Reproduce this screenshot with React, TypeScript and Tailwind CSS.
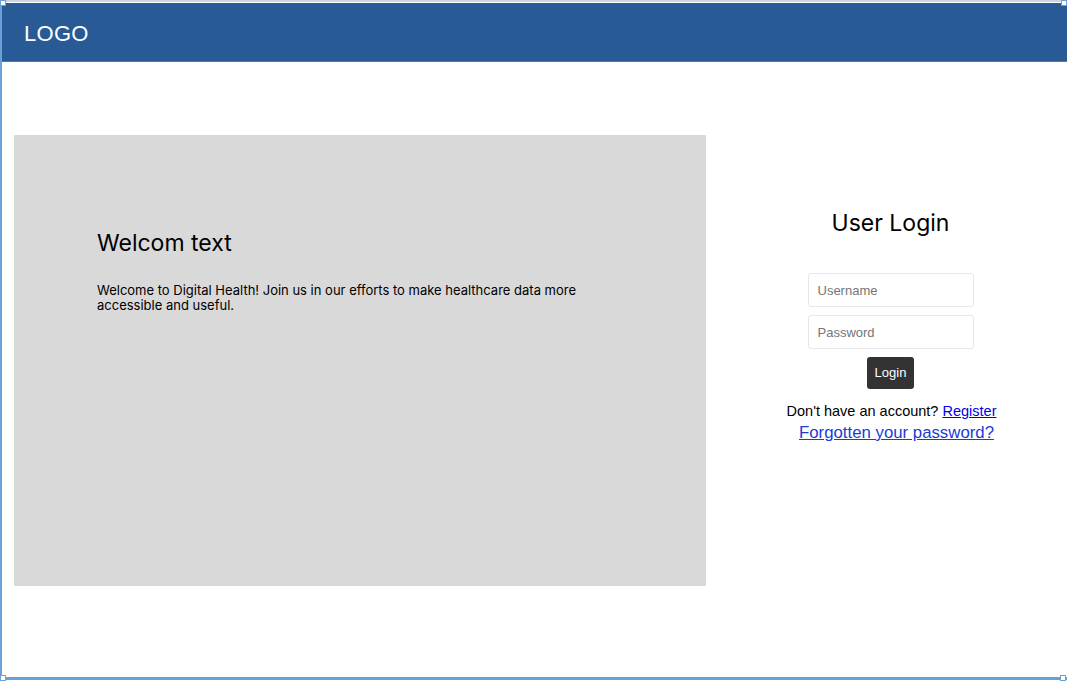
export default function App() {
  return (
    <div className="relative w-[1067px] h-[682px] bg-white overflow-hidden">
      {/* frame */}
      <div className="flex flex-col h-[680px] border-t-[2px] border-t-[#c9d6e6] border-l-[2px] border-l-[#6a9fd8] border-b-[3px] border-b-[#6a9fd8]">
        <div className="h-[1px] bg-white"></div>
        {/* header */}
        <header className="h-[59px] bg-[#285a96] border-b border-b-[#4a78ad] flex items-center pl-[22px] pt-[3px]">
          <span className="text-white text-[22px] font-['Liberation_Sans',sans-serif] tracking-[0.3px]">LOGO</span>
        </header>

        <div className="flex pt-[73px]">
          {/* welcome panel */}
          <section className="ml-[12px] w-[692px] h-[451px] bg-[#d9d9d9] pl-[83px] pt-[93px] font-['Inter',sans-serif] text-black">
            <h1 className="text-[23px] leading-[30px]">Welcom text</h1>
            <p className="mt-[25px] text-[13px] leading-[15px] w-[500px]">
              Welcome to Digital Health! Join us in our efforts to make healthcare data more accessible and useful.
            </p>
          </section>

          {/* login */}
          <section className="flex-1 flex flex-col items-center pt-[74px] pl-[8px]">
            <h2 className="font-['Inter',sans-serif] text-[23px] leading-[29px] text-black">User Login</h2>
            <div className="mt-[35px] flex flex-col items-center gap-[8px] font-['Liberation_Sans',sans-serif]">
              <input
                placeholder="Username"
                className="w-[166px] h-[34px] border border-[#e8e8e8] rounded-[3px] px-[9px] text-[13px] placeholder:text-[#757575] outline-none"
              />
              <input
                type="password"
                placeholder="Password"
                className="w-[166px] h-[34px] border border-[#e8e8e8] rounded-[3px] px-[9px] text-[13px] placeholder:text-[#757575] outline-none"
              />
              <button className="w-[47px] h-[32px] bg-[#333333] text-white text-[13px] rounded-[3px]">Login</button>
            </div>
            <div className="mt-[13px] flex flex-col items-center font-['Liberation_Sans',sans-serif] pl-[2px]">
              <p className="text-[14.5px] leading-[18px] text-black">
                Don't have an account? <a className="text-[#0000ee] underline">Register</a>
              </p>
              <a className="mt-[2px] ml-[10px] text-[16.8px] leading-[21px] text-[#1a3bd6] underline">Forgotten your password?</a>
            </div>
          </section>
        </div>
      </div>

      {/* selection handles */}
      <div className="absolute left-0 top-0 w-[6px] h-[6px] bg-white border border-[#6a9fd8]"></div>
      <div className="absolute right-0 top-0 w-[6px] h-[6px] bg-white border border-[#6a9fd8]"></div>
      <div className="absolute left-0 top-[675px] w-[6px] h-[6px] bg-white border border-[#6a9fd8]"></div>
      <div className="absolute right-[1px] top-[675px] w-[6px] h-[6px] bg-white border border-[#6a9fd8]"></div>
    </div>
  );
}
